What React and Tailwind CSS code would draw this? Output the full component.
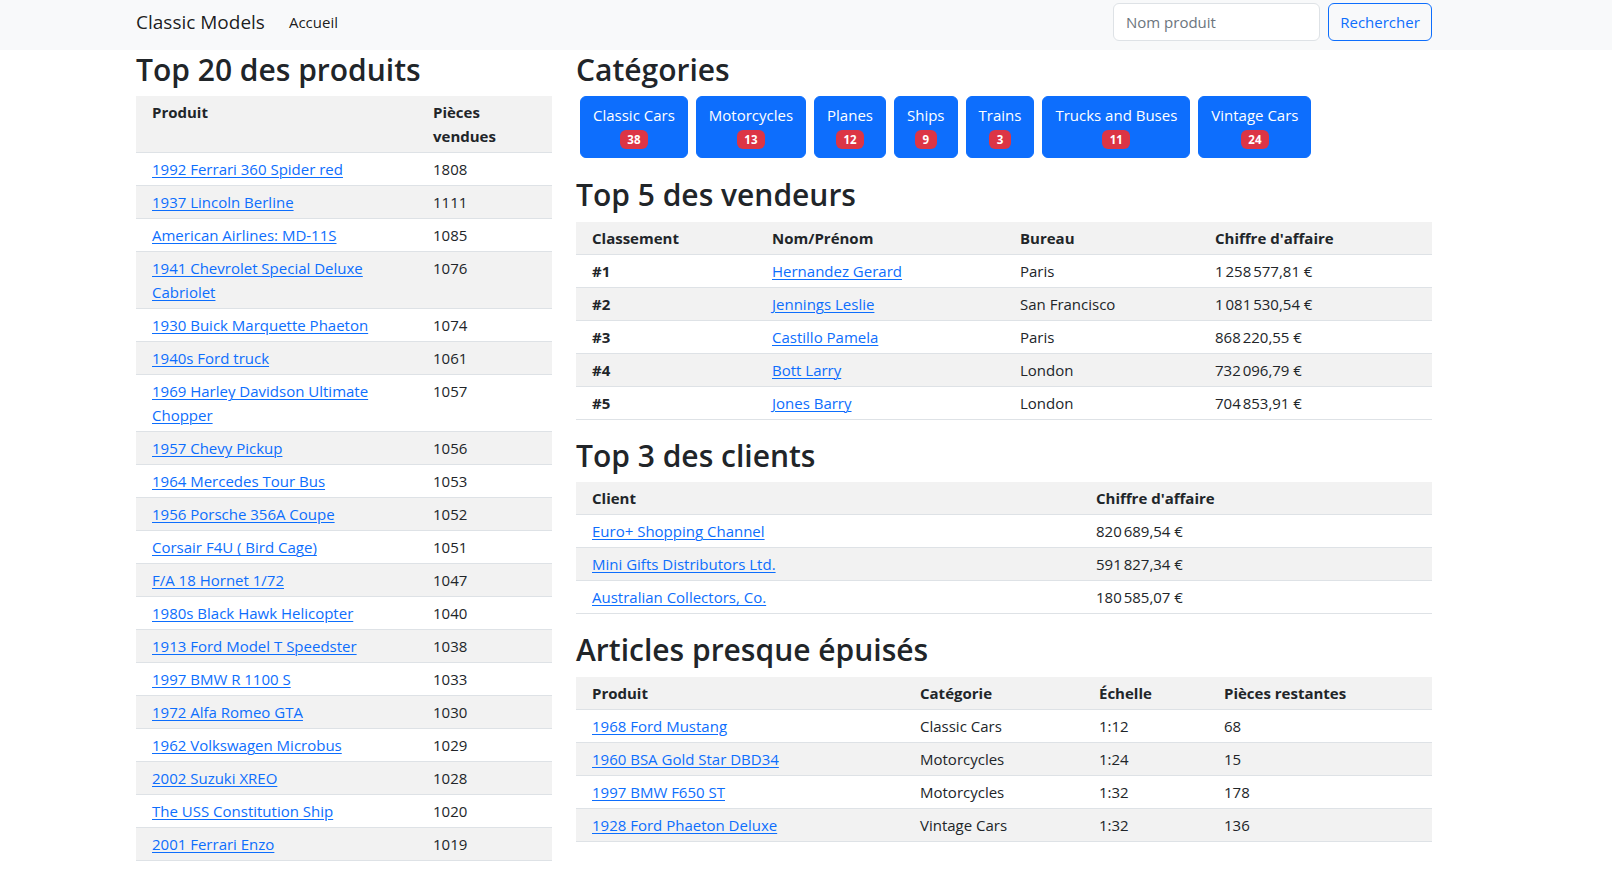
import React from "react";

const nb = "\u202f";

const products = [
  ["1992 Ferrari 360 Spider red", 1808],
  ["1937 Lincoln Berline", 1111],
  ["American Airlines: MD-11S", 1085],
  ["1941 Chevrolet Special Deluxe Cabriolet", 1076],
  ["1930 Buick Marquette Phaeton", 1074],
  ["1940s Ford truck", 1061],
  ["1969 Harley Davidson Ultimate Chopper", 1057],
  ["1957 Chevy Pickup", 1056],
  ["1964 Mercedes Tour Bus", 1053],
  ["1956 Porsche 356A Coupe", 1052],
  ["Corsair F4U ( Bird Cage)", 1051],
  ["F/A 18 Hornet 1/72", 1047],
  ["1980s Black Hawk Helicopter", 1040],
  ["1913 Ford Model T Speedster", 1038],
  ["1997 BMW R 1100 S", 1033],
  ["1972 Alfa Romeo GTA", 1030],
  ["1962 Volkswagen Microbus", 1029],
  ["2002 Suzuki XREO", 1028],
  ["The USS Constitution Ship", 1020],
  ["2001 Ferrari Enzo", 1019],
];

const categories = [
  ["Classic Cars", 38],
  ["Motorcycles", 13],
  ["Planes", 12],
  ["Ships", 9],
  ["Trains", 3],
  ["Trucks and Buses", 11],
  ["Vintage Cars", 24],
];

const sellers = [
  ["#1", "Hernandez Gerard", "Paris", `1${nb}258${nb}577,81 €`],
  ["#2", "Jennings Leslie", "San Francisco", `1${nb}081${nb}530,54 €`],
  ["#3", "Castillo Pamela", "Paris", `868${nb}220,55 €`],
  ["#4", "Bott Larry", "London", `732${nb}096,79 €`],
  ["#5", "Jones Barry", "London", `704${nb}853,91 €`],
];

const clients = [
  ["Euro+ Shopping Channel", `820${nb}689,54 €`],
  ["Mini Gifts Distributors Ltd.", `591${nb}827,34 €`],
  ["Australian Collectors, Co.", `180${nb}585,07 €`],
];

const stock = [
  ["1968 Ford Mustang", "Classic Cars", "1:12", "68"],
  ["1960 BSA Gold Star DBD34", "Motorcycles", "1:24", "15"],
  ["1997 BMW F650 ST", "Motorcycles", "1:32", "178"],
  ["1928 Ford Phaeton Deluxe", "Vintage Cars", "1:32", "136"],
];

function Link({ children }) {
  return (
    <a href="#" className="text-[#0d6efd] underline underline-offset-[2px] decoration-1">
      {children}
    </a>
  );
}

function rowCls(i) {
  return `border-b border-[#dee2e6] ${i % 2 === 1 ? "bg-[#f2f2f2]" : "bg-white"}`;
}

const cell = "px-4 py-1 text-left align-top leading-6";

function H2({ children }) {
  return (
    <h2 className="text-[30px] font-semibold leading-[36.4px] pt-[2px] mb-2 text-[#212529]">
      {children}
    </h2>
  );
}

export default function App() {
  return (
    <div
      className="min-h-screen bg-white text-[#212529] text-[15px] leading-6"
      style={{ fontFamily: '"Open Sans", "Noto Sans", sans-serif' }}
    >
      <nav className="bg-[#f8f9fa] h-[50px] pt-[3px]">
        <div className="flex items-center h-[38px] pl-[136px] w-[1432px]">
          <a href="#" className="text-[19px] text-black/90 mr-4">Classic Models</a>
          <a href="#" className="px-2 text-black/90">Accueil</a>
          <div className="ml-auto flex items-center gap-2">
            <input
              type="text"
              placeholder="Nom produit"
              className="w-[207px] h-[38px] px-3 bg-white border border-[#dee2e6] rounded-md placeholder:text-[#6c757d] outline-none"
            />
            <button className="w-[104px] h-[38px] border border-[#0d6efd] text-[#0d6efd] rounded-md bg-transparent">
              Rechercher
            </button>
          </div>
        </div>
      </nav>

      <main className="flex gap-6 pl-[136px]">
        <section className="w-[416px]">
          <H2>Top 20 des produits</H2>
          <table className="w-full border-collapse mb-4">
            <colgroup>
              <col className="w-[281px]" />
              <col className="w-[135px]" />
            </colgroup>
            <tbody>
              <tr className="border-b border-[#dee2e6] bg-[#f2f2f2]">
                <th className={`${cell} font-bold`}>Produit</th>
                <th className={`${cell} font-bold`}>Pièces vendues</th>
              </tr>
              {products.map(([name, qty], i) => (
                <tr key={name} className={rowCls(i)}>
                  <td className={cell}><Link>{name}</Link></td>
                  <td className={cell}>{qty}</td>
                </tr>
              ))}
            </tbody>
          </table>
        </section>

        <section className="w-[856px]">
          <H2>Catégories</H2>
          <div className="flex flex-wrap gap-2 px-1 mb-[17px]">
            {categories.map(([name, n]) => (
              <button
                key={name}
                className="flex flex-col items-center px-3 py-[6px] bg-[#0d6efd] border border-[#0d6efd] rounded-md text-white leading-6"
              >
                <span>{name}</span>
                <span className="h-6 flex items-center">
                  <span className="bg-[#dc3545] text-white text-[11.5px] font-bold leading-none px-[7.5px] py-[4px] rounded-md">
                    {n}
                  </span>
                </span>
              </button>
            ))}
          </div>

          <H2>Top 5 des vendeurs</H2>
          <table className="w-full border-collapse mb-4">
            <colgroup>
              <col className="w-[180px]" />
              <col className="w-[248px]" />
              <col className="w-[195px]" />
              <col className="w-[233px]" />
            </colgroup>
            <tbody>
              <tr className="border-b border-[#dee2e6] bg-[#f2f2f2]">
                <th className={`${cell} font-bold`}>Classement</th>
                <th className={`${cell} font-bold`}>Nom/Prénom</th>
                <th className={`${cell} font-bold`}>Bureau</th>
                <th className={`${cell} font-bold`}>Chiffre d'affaire</th>
              </tr>
              {sellers.map(([rank, name, office, ca], i) => (
                <tr key={rank} className={rowCls(i)}>
                  <th className={`${cell} font-bold`}>{rank}</th>
                  <td className={cell}><Link>{name}</Link></td>
                  <td className={cell}>{office}</td>
                  <td className={cell}>{ca}</td>
                </tr>
              ))}
            </tbody>
          </table>

          <H2>Top 3 des clients</H2>
          <table className="w-full border-collapse mb-4">
            <colgroup>
              <col className="w-[504px]" />
              <col className="w-[352px]" />
            </colgroup>
            <tbody>
              <tr className="border-b border-[#dee2e6] bg-[#f2f2f2]">
                <th className={`${cell} font-bold`}>Client</th>
                <th className={`${cell} font-bold`}>Chiffre d'affaire</th>
              </tr>
              {clients.map(([name, ca], i) => (
                <tr key={name} className={rowCls(i)}>
                  <td className={cell}><Link>{name}</Link></td>
                  <td className={cell}>{ca}</td>
                </tr>
              ))}
            </tbody>
          </table>

          <H2>Articles presque épuisés</H2>
          <table className="w-full border-collapse mb-4">
            <colgroup>
              <col className="w-[328px]" />
              <col className="w-[179px]" />
              <col className="w-[125px]" />
              <col className="w-[224px]" />
            </colgroup>
            <tbody>
              <tr className="border-b border-[#dee2e6] bg-[#f2f2f2]">
                <th className={`${cell} font-bold`}>Produit</th>
                <th className={`${cell} font-bold`}>Catégorie</th>
                <th className={`${cell} font-bold`}>Échelle</th>
                <th className={`${cell} font-bold`}>Pièces restantes</th>
              </tr>
              {stock.map(([name, cat, scale, left], i) => (
                <tr key={name} className={rowCls(i)}>
                  <td className={cell}><Link>{name}</Link></td>
                  <td className={cell}>{cat}</td>
                  <td className={cell}>{scale}</td>
                  <td className={cell}>{left}</td>
                </tr>
              ))}
            </tbody>
          </table>
        </section>
      </main>
    </div>
  );
}
